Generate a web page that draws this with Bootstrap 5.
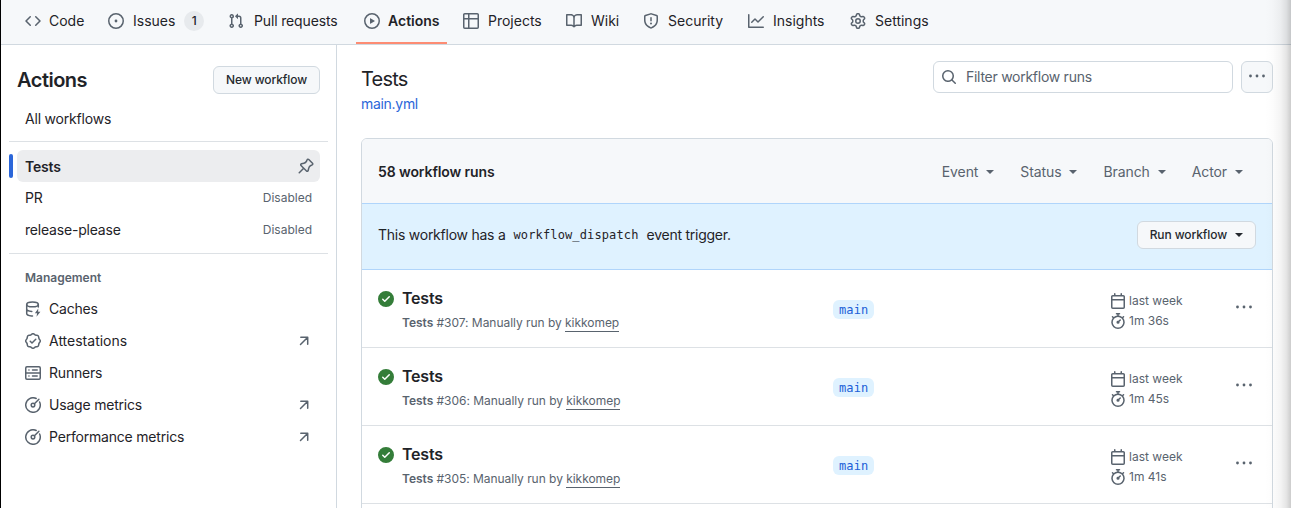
<!DOCTYPE html>
<html lang="en">
<head>
<meta charset="utf-8">
<meta name="viewport" content="width=device-width, initial-scale=1">
<title>Tests · Workflow runs</title>
<link href="https://cdn.jsdelivr.net/npm/bootstrap@5.3.0/dist/css/bootstrap.min.css" rel="stylesheet">
<style>
:root{--line:#d1d9e0;--soft:#dde1e5;--ink:#1f2328;--dim:#59636e;--subtle:#f6f8fa;--link:#2b66d9}
body{font-family:Inter,"Liberation Sans",sans-serif;font-size:14px;line-height:20px;color:var(--ink);background:#fff;height:508px;overflow:hidden}
.page-frame{height:508px;border-left:1px solid #000;position:relative;overflow:hidden}
.edge-shade{position:absolute;top:0;right:0;bottom:0;width:26px;background:linear-gradient(to right,rgba(0,0,0,0),rgba(0,0,0,.012) 30%,rgba(0,0,0,.045) 60%,rgba(0,0,0,.1) 82%,rgba(0,0,0,.2));pointer-events:none}
.oct{width:16px;height:16px;fill:currentColor;flex:none;display:block;color:var(--dim)}
.stroke-icon{fill:none;stroke:currentColor;stroke-width:1.5;stroke-linecap:round;stroke-linejoin:round}
.repo-nav{height:45px;flex-wrap:nowrap;background:var(--subtle);border-bottom:1px solid var(--line);padding-left:16px;gap:8px}
.repo-nav .nav-link{display:flex;align-items:center;gap:8px;height:44px;padding:0 8px;color:var(--ink);white-space:nowrap;border-bottom:2px solid transparent}
.repo-nav .nav-link.active{border-bottom-color:#fd8c73;font-weight:600}
.tab-label{display:flex;align-items:center;padding-left:1px}
.w-code{width:35px;padding-left:0}.w-issues{width:72px}.w-pulls{width:88px;padding-left:2px;letter-spacing:-.15px}.w-actions{width:51px;padding-left:0}.w-projects{width:55px}.w-wiki{width:29px}.w-security{width:57px}.w-insights{width:54px}
.count-pill{width:20px;height:20px;background:#e7eaed;font-size:12px;font-weight:500;margin-left:9px}
.side{width:336px;height:463px;border-right:1px solid var(--line);padding:21px 8px 0;letter-spacing:-.2px}
.side-head{padding:0 8px;height:28px;margin-bottom:9px}
.side-head h2{font-size:20px;font-weight:600;letter-spacing:-.5px}
.gh-btn{height:28px;padding:0 12px;font-size:12px;font-weight:500;line-height:18px;letter-spacing:-.1px;background:var(--subtle);border:1px solid var(--line);border-radius:6px;color:#25292e;white-space:nowrap}
.side-item{height:32px;margin:0 8px;padding:0 8px;border-radius:6px;color:var(--ink);text-decoration:none;position:relative}
.side-item.current{background:#ecedef;font-weight:600;padding-right:6px}
.side-item.current span{padding-top:2px}
.side-item.current::before{content:"";position:absolute;left:-8px;top:4px;width:4px;height:24px;border-radius:3px;background:var(--link)}
.side-rule{height:1px;background:var(--soft)}
.rule-top{margin:6px 0 8px}
.rule-mid{margin-top:7px}
.side-state{font-size:12px;letter-spacing:0;color:var(--dim)}
.side-caption{font-size:12px;font-weight:600;letter-spacing:0;color:var(--dim);padding:14px 16px 5px}
.even-text{letter-spacing:0}
.main-pane{padding:16px 18px 0 24px;min-width:0}
.main-title{font-size:20px;font-weight:400;line-height:24px;letter-spacing:-.8px;padding:6px 0 3px}
.blue-link{color:var(--link);text-decoration:none;letter-spacing:-.3px}
.find-box{width:300px;height:32px;border:1px solid var(--line);border-radius:6px;padding:0 7px;color:var(--dim);gap:9px;letter-spacing:-.27px}
.dots-btn{width:32px;height:32px;border:1px solid var(--line);border-radius:6px;background:var(--subtle);padding:0 0 2px}
.runs-card{border:1px solid var(--line);border-radius:6px 6px 0 0;margin-top:24px;height:400px;--bs-card-border-width:0}
.runs-head{height:64px;background:var(--subtle);border-radius:5px 5px 0 0;padding:2px 29px 0 16px;letter-spacing:-.1px}
.filter-set{gap:26px}
.filter-item{color:var(--dim)}
.caret-down{width:0;height:0;border:4px solid transparent;border-top-color:currentColor;border-bottom:0;margin-left:8px;display:inline-block}
.dispatch-bar{height:67px;background:#dff2ff;border-top:1px solid #b0d5fb;border-bottom:1px solid #b0d5fb;padding:0 16px 3px}
.dispatch-text{letter-spacing:-.25px}
.mono-text{font-family:"DejaVu Sans Mono","Liberation Mono",monospace;font-size:12px;letter-spacing:.13px}
.run-row{height:78px;border-bottom:1px solid var(--soft);padding:19px 16px 0}
.run-name{font-size:16px;font-weight:600;line-height:20px;letter-spacing:-.2px;margin-top:-1px}
.run-note{font-size:12px;line-height:18px;color:var(--dim);margin-top:6px;letter-spacing:-.04px}
.run-note a{color:var(--dim);text-decoration:none;border-bottom:1px solid var(--dim);padding-bottom:1px}
.run-main{width:455px;flex:none;gap:8px}
.run-ok{color:#347d39;margin-top:2px}
.run-menu{margin:10px 0 0 1px}
.branch-col{width:277px;flex:none;padding-top:11px}
.branch-chip{background:#dff2ff;color:#2060d8;border-radius:6px;height:19px;line-height:19px;padding:1px 6px 0;display:inline-block;vertical-align:top}
.time-col{width:125px;flex:none;font-size:12px;color:var(--dim);padding-top:2px}
.time-col>div{height:20px;gap:3px}
</style>
</head>
<body>
<svg width="0" height="0" class="position-absolute" aria-hidden="true">
<symbol id="i-code" viewBox="0 0 16 16"><path d="M4.72 3.22a.75.75 0 0 1 1.06 1.06L2.06 8l3.72 3.72a.75.75 0 1 1-1.06 1.06L.47 8.53a.75.75 0 0 1 0-1.06Zm6.56 0a.75.75 0 1 0-1.06 1.06L13.94 8l-3.72 3.72a.75.75 0 1 0 1.06 1.06l4.25-4.25a.75.75 0 0 0 0-1.06Z"/></symbol>
<symbol id="i-issue" viewBox="0 0 16 16"><circle cx="8" cy="8" r="1.4"/><path d="M8 0a8 8 0 1 1 0 16A8 8 0 0 1 8 0ZM1.5 8a6.5 6.5 0 1 0 13 0 6.5 6.5 0 0 0-13 0Z"/></symbol>
<symbol id="i-pull" viewBox="0 0 16 16"><path d="M1.5 3.25a2.25 2.25 0 1 1 3 2.122v5.256a2.251 2.251 0 1 1-1.5 0V5.372A2.25 2.25 0 0 1 1.5 3.25Zm5.677-.177L9.573.677A.25.25 0 0 1 10 .854V2.5h1A2.5 2.5 0 0 1 13.5 5v5.628a2.251 2.251 0 1 1-1.5 0V5a1 1 0 0 0-1-1h-1v1.646a.25.25 0 0 1-.427.177L7.177 3.427a.25.25 0 0 1 0-.354ZM3.75 2.5a.75.75 0 1 0 0 1.5.75.75 0 0 0 0-1.5Zm0 9.5a.75.75 0 1 0 0 1.5.75.75 0 0 0 0-1.5Zm8.25.75a.75.75 0 1 0 1.5 0 .75.75 0 0 0-1.5 0Z"/></symbol>
<symbol id="i-play" viewBox="0 0 16 16"><path d="M8 0a8 8 0 1 1 0 16A8 8 0 0 1 8 0ZM1.5 8a6.5 6.5 0 1 0 13 0 6.5 6.5 0 0 0-13 0Zm4.879-2.773 4.264 2.559a.25.25 0 0 1 0 .428l-4.264 2.559A.25.25 0 0 1 6 10.559V5.442a.25.25 0 0 1 .379-.215Z"/></symbol>
<symbol id="i-table" viewBox="0 0 16 16"><path d="M0 1.75C0 .784.784 0 1.75 0h12.5C15.216 0 16 .784 16 1.75v12.5A1.75 1.75 0 0 1 14.25 16H1.75A1.75 1.75 0 0 1 0 14.25ZM6.5 6.5v8h7.75a.25.25 0 0 0 .25-.25V6.5Zm8-1.5V1.75a.25.25 0 0 0-.25-.25H6.5V5Zm-13 1.5v7.75c0 .138.112.25.25.25H5v-8ZM5 5V1.5H1.75a.25.25 0 0 0-.25.25V5Z"/></symbol>
<symbol id="i-book" viewBox="0 0 16 16"><path d="M0 1.75A.75.75 0 0 1 .75 1h4.253c1.227 0 2.317.59 3 1.501A3.743 3.743 0 0 1 11.006 1h4.245a.75.75 0 0 1 .75.75v10.5a.75.75 0 0 1-.75.75h-4.507a2.25 2.25 0 0 0-1.591.659l-.622.621a.75.75 0 0 1-1.06 0l-.622-.621A2.25 2.25 0 0 0 5.258 13H.75a.75.75 0 0 1-.75-.75Zm7.251 10.324.004-5.073-.002-2.253A2.25 2.25 0 0 0 5.003 2.5H1.5v9h3.757a3.75 3.75 0 0 1 1.994.574ZM8.755 4.75l-.004 7.322a3.752 3.752 0 0 1 1.992-.572H14.5v-9h-3.495a2.25 2.25 0 0 0-2.25 2.25Z"/></symbol>
<symbol id="i-shield" viewBox="0 0 16 16"><path d="M7.467.133a1.748 1.748 0 0 1 1.066 0l5.25 1.68A1.75 1.75 0 0 1 15 3.48V7c0 1.566-.32 3.182-1.303 4.682-.983 1.498-2.585 2.813-5.032 3.855a1.697 1.697 0 0 1-1.33 0c-2.447-1.042-4.049-2.357-5.032-3.855C1.32 10.182 1 8.566 1 7V3.48a1.75 1.75 0 0 1 1.217-1.667Zm.61 1.429a.25.25 0 0 0-.153 0l-5.25 1.68a.25.25 0 0 0-.174.238V7c0 1.358.275 2.666 1.057 3.86.784 1.194 2.121 2.34 4.366 3.297a.196.196 0 0 0 .154 0c2.245-.956 3.582-2.104 4.366-3.298C13.225 9.666 13.5 8.36 13.5 7V3.48a.251.251 0 0 0-.174-.237l-5.25-1.68ZM8.75 4.75v3a.75.75 0 0 1-1.5 0v-3a.75.75 0 0 1 1.5 0ZM9 10.5a1 1 0 1 1-2 0 1 1 0 0 1 2 0Z"/></symbol>
<symbol id="i-graph" viewBox="0 0 16 16"><path d="M1.5 1.75V13.5h13.75a.75.75 0 0 1 0 1.5H.75a.75.75 0 0 1-.75-.75V1.75a.75.75 0 0 1 1.5 0Zm14.28 2.53-5.25 5.25a.75.75 0 0 1-1.06 0L7 7.06 4.28 9.78a.751.751 0 0 1-1.042-.018.751.751 0 0 1-.018-1.042l3.25-3.25a.75.75 0 0 1 1.06 0L10 7.94l4.72-4.72a.751.751 0 0 1 1.042.018.751.751 0 0 1 .018 1.042Z"/></symbol>
<symbol id="i-gear" viewBox="0 0 16 16"><path d="M8 0a8.2 8.2 0 0 1 .701.031C9.444.095 9.99.645 10.16 1.29l.288 1.107c.018.066.079.158.212.224.231.114.454.243.668.386.123.082.233.09.299.071l1.103-.303c.644-.176 1.392.021 1.82.63.27.385.506.792.704 1.218.315.675.111 1.422-.364 1.891l-.814.806c-.049.048-.098.147-.088.294.016.257.016.515 0 .772-.01.147.038.246.088.294l.814.806c.475.469.679 1.216.364 1.891a7.977 7.977 0 0 1-.704 1.217c-.428.61-1.176.807-1.82.63l-1.102-.302c-.067-.019-.177-.011-.3.071a5.909 5.909 0 0 1-.668.386c-.133.066-.194.158-.211.224l-.29 1.106c-.168.646-.715 1.196-1.458 1.26a8.006 8.006 0 0 1-1.402 0c-.743-.064-1.289-.614-1.458-1.26l-.289-1.106c-.018-.066-.079-.158-.212-.224a5.738 5.738 0 0 1-.668-.386c-.123-.082-.233-.09-.299-.071l-1.103.303c-.644.176-1.392-.021-1.82-.63a8.12 8.12 0 0 1-.704-1.218c-.315-.675-.111-1.422.363-1.891l.815-.806c.05-.048.098-.147.088-.294a6.214 6.214 0 0 1 0-.772c.01-.147-.038-.246-.088-.294l-.815-.806C.635 6.045.431 5.298.746 4.623a7.92 7.92 0 0 1 .704-1.217c.428-.61 1.176-.807 1.82-.63l1.102.302c.067.019.177.011.3-.071.214-.143.437-.272.668-.386.133-.066.194-.158.211-.224l.29-1.106C6.009.645 6.556.095 7.299.03 7.53.01 7.764 0 8 0Zm-.571 1.525c-.036.003-.108.036-.137.146l-.289 1.105c-.147.561-.549.967-.998 1.189-.173.086-.34.183-.5.29-.417.278-.97.423-1.529.27l-1.103-.303c-.109-.03-.175.016-.195.045-.22.312-.412.644-.573.99-.014.031-.021.11.059.19l.815.806c.411.406.562.957.53 1.456a4.709 4.709 0 0 0 0 .582c.032.499-.119 1.05-.53 1.456l-.815.806c-.081.08-.073.159-.059.19.162.346.353.677.573.989.02.03.085.076.195.046l1.102-.303c.56-.153 1.113-.008 1.53.27.161.107.328.204.501.29.447.222.85.629.997 1.189l.289 1.105c.029.109.101.143.137.146a6.6 6.6 0 0 0 1.142 0c.036-.003.108-.036.137-.146l.289-1.105c.147-.561.549-.967.998-1.189.173-.086.34-.183.5-.29.417-.278.97-.423 1.529-.27l1.103.303c.109.029.175-.016.195-.045.22-.313.411-.644.573-.99.014-.031.021-.11-.059-.19l-.815-.806c-.411-.406-.562-.957-.53-1.456a4.709 4.709 0 0 0 0-.582c-.032-.499.119-1.05.53-1.456l.815-.806c.081-.08.073-.159.059-.19a6.464 6.464 0 0 0-.573-.989c-.02-.03-.085-.076-.195-.046l-1.102.303c-.56.153-1.113.008-1.53-.27a4.44 4.44 0 0 0-.501-.29c-.447-.222-.85-.629-.997-1.189l-.289-1.105c-.029-.11-.101-.143-.137-.146a6.6 6.6 0 0 0-1.142 0ZM11 8a3 3 0 1 1-6 0 3 3 0 0 1 6 0ZM9.5 8a1.5 1.5 0 1 0-3.001.001A1.5 1.5 0 0 0 9.5 8Z"/></symbol>
<symbol id="i-check" viewBox="0 0 16 16"><path d="M8 16A8 8 0 1 1 8 0a8 8 0 0 1 0 16Zm3.78-9.72a.751.751 0 0 0-.018-1.042.751.751 0 0 0-1.042-.018L6.75 9.19 5.28 7.72a.751.751 0 0 0-1.042.018.751.751 0 0 0-.018 1.042l2 2a.75.75 0 0 0 1.06 0Z"/></symbol>
<symbol id="i-dots" viewBox="0 0 16 16"><circle cx="1.5" cy="8" r="1.4"/><circle cx="8" cy="8" r="1.4"/><circle cx="14.5" cy="8" r="1.4"/></symbol>
<symbol id="i-calendar" viewBox="0 0 16 16"><path d="M4.75 0a.75.75 0 0 1 .75.75V2h5V.75a.75.75 0 0 1 1.5 0V2h1.25c.966 0 1.75.784 1.75 1.75v10.5A1.75 1.75 0 0 1 13.25 16H2.75A1.75 1.75 0 0 1 1 14.25V3.75C1 2.784 1.784 2 2.75 2H4V.75A.75.75 0 0 1 4.75 0ZM2.5 7.5v6.75c0 .138.112.25.25.25h10.5a.25.25 0 0 0 .25-.25V7.5Zm10.75-4H2.75a.25.25 0 0 0-.25.25V6h11V3.75a.25.25 0 0 0-.25-.25Z"/></symbol>
<symbol id="i-watch" viewBox="0 0 16 16"><path d="M5.75.75A.75.75 0 0 1 6.5 0h3a.75.75 0 0 1 0 1.5h-.75v1l-.001.041a6.724 6.724 0 0 1 3.464 1.435l.007-.006.75-.75a.749.749 0 0 1 1.275.326.749.749 0 0 1-.215.734l-.75.75-.006.007a6.75 6.75 0 1 1-10.548 0L2.72 5.03l-.75-.75a.751.751 0 0 1 .018-1.042.751.751 0 0 1 1.042-.018l.75.75.007.006A6.72 6.72 0 0 1 7.25 2.541V1.5H6.5a.75.75 0 0 1-.75-.75ZM8 14.5a5.25 5.25 0 1 0-.001-10.501A5.25 5.25 0 0 0 8 14.5Zm.389-6.7 1.33-1.33a.75.75 0 1 1 1.061 1.06L9.45 8.861A1.503 1.503 0 0 1 8 10.75a1.499 1.499 0 1 1 .389-2.95Z"/></symbol>
<symbol id="i-search" viewBox="0 0 16 16"><path d="M10.68 11.74a6 6 0 0 1-7.922-8.982 6 6 0 0 1 8.982 7.922l3.04 3.04a.749.749 0 0 1-.326 1.275.749.749 0 0 1-.734-.215ZM11.5 7a4.499 4.499 0 1 0-8.997 0A4.499 4.499 0 0 0 11.5 7Z"/></symbol>
<symbol id="i-pin" viewBox="0 0 16 16"><path d="m11.294.984 3.722 3.722a1.75 1.75 0 0 1-.504 2.826l-1.327.613a3.089 3.089 0 0 0-1.707 2.084l-.584 2.454c-.317 1.332-1.972 1.8-2.94.832L5.75 11.311 1.78 15.28a.749.749 0 1 1-1.06-1.06l3.969-3.97-2.204-2.204c-.968-.968-.5-2.623.832-2.94l2.454-.584a3.08 3.08 0 0 0 2.084-1.707l.613-1.327a1.75 1.75 0 0 1 2.826-.504ZM6.283 9.723l2.732 2.731a.25.25 0 0 0 .42-.119l.584-2.454a4.586 4.586 0 0 1 2.537-3.098l1.328-.613a.25.25 0 0 0 .072-.404l-3.722-3.722a.25.25 0 0 0-.404.072l-.613 1.328a4.584 4.584 0 0 1-3.098 2.537l-2.454.584a.25.25 0 0 0-.119.42l2.731 2.732Z"/></symbol>
<symbol id="i-verified" viewBox="0 0 16 16"><path fill-rule="evenodd" d="m9.585.52.929.68c.153.112.331.186.518.215l1.138.175a2.678 2.678 0 0 1 2.24 2.24l.174 1.139c.029.187.103.365.215.518l.68.928a2.677 2.677 0 0 1 0 3.17l-.68.928a1.174 1.174 0 0 0-.215.518l-.175 1.138a2.678 2.678 0 0 1-2.241 2.241l-1.138.175a1.17 1.17 0 0 0-.518.215l-.928.68a2.677 2.677 0 0 1-3.17 0l-.928-.68a1.174 1.174 0 0 0-.518-.215L3.83 14.41a2.678 2.678 0 0 1-2.24-2.24l-.175-1.138a1.17 1.17 0 0 0-.215-.518l-.68-.928a2.677 2.677 0 0 1 0-3.17l.68-.928c.112-.153.186-.331.215-.518l.175-1.14a2.678 2.678 0 0 1 2.24-2.24l1.139-.175c.187-.029.365-.103.518-.215l.928-.68a2.677 2.677 0 0 1 3.17 0ZM7.303 1.728l-.927.68a2.67 2.67 0 0 1-1.18.489l-1.137.174a1.179 1.179 0 0 0-.987.987l-.174 1.136a2.677 2.677 0 0 1-.489 1.18l-.68.928a1.18 1.18 0 0 0 0 1.394l.68.927c.256.348.424.753.489 1.18l.174 1.137c.078.509.478.909.987.987l1.136.174a2.67 2.67 0 0 1 1.18.489l.928.68c.414.305.979.305 1.394 0l.927-.68a2.67 2.67 0 0 1 1.18-.489l1.137-.174a1.18 1.18 0 0 0 .987-.987l.174-1.136a2.67 2.67 0 0 1 .489-1.18l.68-.928a1.176 1.176 0 0 0 0-1.394l-.68-.927a2.686 2.686 0 0 1-.489-1.18l-.174-1.137a1.179 1.179 0 0 0-.987-.987l-1.136-.174a2.677 2.677 0 0 1-1.18-.489l-.928-.68a1.176 1.176 0 0 0-1.394 0ZM11.28 6.78l-3.75 3.75a.75.75 0 0 1-1.06 0L4.72 8.78a.751.751 0 0 1 .018-1.042.751.751 0 0 1 1.042-.018L7 8.94l3.22-3.22a.751.751 0 0 1 1.042.018.751.751 0 0 1 .018 1.042Z"/></symbol>
<symbol id="i-cache" viewBox="0 0 16 16"><g class="stroke-icon"><ellipse cx="7.5" cy="3.4" rx="5.8" ry="2.4"/><path d="M1.7 3.4v9.2c0 1.2 2 2.2 4.8 2.5h1M13.3 3.4V6M1.7 8c0 1.2 2.2 2.2 5.1 2.4"/></g><path d="M13.3 7.4 9.9 12.3h2.2l-.6 3.5 3.9-5h-2.3z"/></symbol>
<symbol id="i-server" viewBox="0 0 16 16"><g class="stroke-icon"><rect x=".75" y="1.75" width="14.5" height="12.5" rx="1.2"/><path d="M.75 8h14.5M3.9 4.9h.1M7.5 4.9h4.7M3.9 11.1h.1M7.5 11.1h4.7"/></g></symbol>
<symbol id="i-meter" viewBox="0 0 16 16"><g class="stroke-icon"><path d="M11.2 1.5A7.25 7.25 0 1 0 14.6 5"/><circle cx="8" cy="8.1" r="1.8"/><path d="m9.4 6.7 4.5-4.5"/></g></symbol>
<symbol id="i-arrow" viewBox="0 0 16 16"><path class="stroke-icon" d="M4.8 4.3h6.9v6.9M11.5 4.5l-7 7"/></symbol>
</svg>
<div class="page-frame">
  <nav class="nav repo-nav">
    <a class="nav-link"><svg class="oct"><use href="#i-code"/></svg><span class="tab-label w-code">Code</span></a>
    <a class="nav-link"><svg class="oct"><use href="#i-issue"/></svg><span class="tab-label w-issues">Issues<span class="count-pill rounded-circle d-flex align-items-center justify-content-center">1</span></span></a>
    <a class="nav-link"><svg class="oct"><use href="#i-pull"/></svg><span class="tab-label w-pulls">Pull requests</span></a>
    <a class="nav-link active"><svg class="oct"><use href="#i-play"/></svg><span class="tab-label w-actions">Actions</span></a>
    <a class="nav-link"><svg class="oct"><use href="#i-table"/></svg><span class="tab-label w-projects">Projects</span></a>
    <a class="nav-link"><svg class="oct"><use href="#i-book"/></svg><span class="tab-label w-wiki">Wiki</span></a>
    <a class="nav-link"><svg class="oct"><use href="#i-shield"/></svg><span class="tab-label w-security">Security</span></a>
    <a class="nav-link"><svg class="oct"><use href="#i-graph"/></svg><span class="tab-label w-insights">Insights</span></a>
    <a class="nav-link"><svg class="oct"><use href="#i-gear"/></svg><span class="tab-label">Settings</span></a>
  </nav>
  <div class="d-flex">
    <aside class="side flex-shrink-0">
      <div class="side-head d-flex align-items-center justify-content-between">
        <h2 class="m-0">Actions</h2>
        <button class="gh-btn">New workflow</button>
      </div>
      <a class="side-item d-flex align-items-center">All workflows</a>
      <div class="side-rule rule-top"></div>
      <a class="side-item current d-flex align-items-center justify-content-between"><span>Tests</span><svg class="oct"><use href="#i-pin"/></svg></a>
      <a class="side-item d-flex align-items-center justify-content-between">PR<span class="side-state">Disabled</span></a>
      <a class="side-item d-flex align-items-center justify-content-between">release-please<span class="side-state">Disabled</span></a>
      <div class="side-rule rule-mid"></div>
      <div class="side-caption">Management</div>
      <a class="side-item d-flex align-items-center gap-2"><svg class="oct"><use href="#i-cache"/></svg>Caches</a>
      <a class="side-item even-text d-flex align-items-center gap-2"><svg class="oct"><use href="#i-verified"/></svg>Attestations<svg class="oct ms-auto"><use href="#i-arrow"/></svg></a>
      <a class="side-item d-flex align-items-center gap-2"><svg class="oct"><use href="#i-server"/></svg>Runners</a>
      <a class="side-item d-flex align-items-center gap-2"><svg class="oct"><use href="#i-meter"/></svg>Usage metrics<svg class="oct ms-auto"><use href="#i-arrow"/></svg></a>
      <a class="side-item d-flex align-items-center gap-2"><svg class="oct"><use href="#i-meter"/></svg>Performance metrics<svg class="oct ms-auto"><use href="#i-arrow"/></svg></a>
    </aside>
    <main class="main-pane flex-grow-1">
      <div class="d-flex align-items-start">
        <div class="me-auto">
          <h1 class="main-title m-0">Tests</h1>
          <a class="blue-link d-block">main.yml</a>
        </div>
        <div class="find-box d-flex align-items-center me-2"><svg class="oct"><use href="#i-search"/></svg><span>Filter workflow runs</span></div>
        <button class="dots-btn d-flex align-items-center justify-content-center"><svg class="oct"><use href="#i-dots"/></svg></button>
      </div>
      <section class="card runs-card">
        <div class="runs-head d-flex align-items-center">
          <strong class="me-auto fw-semibold">58 workflow runs</strong>
          <div class="d-flex filter-set">
            <span class="filter-item d-flex align-items-center">Event<i class="caret-down"></i></span>
            <span class="filter-item d-flex align-items-center">Status<i class="caret-down"></i></span>
            <span class="filter-item d-flex align-items-center">Branch<i class="caret-down"></i></span>
            <span class="filter-item d-flex align-items-center">Actor<i class="caret-down"></i></span>
          </div>
        </div>
        <div class="dispatch-bar d-flex align-items-center">
          <div class="me-auto d-flex dispatch-text"><span>This workflow has a</span><span class="mono-text mx-2">workflow_dispatch</span><span>event trigger.</span></div>
          <button class="gh-btn d-flex align-items-center">Run workflow<i class="caret-down"></i></button>
        </div>
        <div class="run-row d-flex">
          <div class="run-main d-flex"><svg class="oct run-ok"><use href="#i-check"/></svg><div><div class="run-name">Tests</div><div class="run-note"><b class="fw-semibold">Tests</b> #307: Manually run by <a>kikkomep</a></div></div></div>
          <div class="branch-col"><span class="mono-text branch-chip">main</span></div>
          <div class="time-col"><div class="d-flex align-items-center"><svg class="oct"><use href="#i-calendar"/></svg>last week</div><div class="d-flex align-items-center"><svg class="oct"><use href="#i-watch"/></svg>1m 36s</div></div>
          <svg class="oct run-menu"><use href="#i-dots"/></svg>
        </div>
        <div class="run-row d-flex">
          <div class="run-main d-flex"><svg class="oct run-ok"><use href="#i-check"/></svg><div><div class="run-name">Tests</div><div class="run-note"><b class="fw-semibold">Tests</b> #306: Manually run by <a>kikkomep</a></div></div></div>
          <div class="branch-col"><span class="mono-text branch-chip">main</span></div>
          <div class="time-col"><div class="d-flex align-items-center"><svg class="oct"><use href="#i-calendar"/></svg>last week</div><div class="d-flex align-items-center"><svg class="oct"><use href="#i-watch"/></svg>1m 45s</div></div>
          <svg class="oct run-menu"><use href="#i-dots"/></svg>
        </div>
        <div class="run-row d-flex">
          <div class="run-main d-flex"><svg class="oct run-ok"><use href="#i-check"/></svg><div><div class="run-name">Tests</div><div class="run-note"><b class="fw-semibold">Tests</b> #305: Manually run by <a>kikkomep</a></div></div></div>
          <div class="branch-col"><span class="mono-text branch-chip">main</span></div>
          <div class="time-col"><div class="d-flex align-items-center"><svg class="oct"><use href="#i-calendar"/></svg>last week</div><div class="d-flex align-items-center"><svg class="oct"><use href="#i-watch"/></svg>1m 41s</div></div>
          <svg class="oct run-menu"><use href="#i-dots"/></svg>
        </div>
      </section>
    </main>
  </div>
  <div class="edge-shade"></div>
</div>
<script src="https://cdn.jsdelivr.net/npm/bootstrap@5.3.0/dist/js/bootstrap.bundle.min.js"></script>
</body>
</html>
